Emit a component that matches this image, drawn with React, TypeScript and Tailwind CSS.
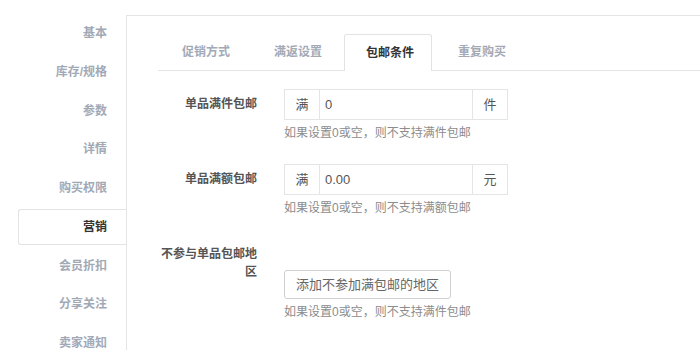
import React from 'react';

const font = { fontFamily: '"Liberation Sans", "Noto Sans CJK SC", sans-serif' };

const navItems = ['基本', '库存/规格', '参数', '详情', '购买权限', '营销', '会员折扣', '分享关注', '卖家通知'];
const tabs = ['促销方式', '满返设置', '包邮条件', '重复购买'];

const InputGroup: React.FC<{ value: string; unit: string }> = ({ value, unit }) => (
  <div className="flex h-[31px] w-[224px] border border-[#e5e5e5] text-[13px] text-[#555]">
    <span className="w-[35px] flex items-center justify-center border-r border-[#e5e5e5]">满</span>
    <span className="flex-1 flex items-center pl-[5px]">{value}</span>
    <span className="w-[35px] flex items-center justify-center border-l border-[#e5e5e5]">{unit}</span>
  </div>
);

const Help: React.FC<{ text: string }> = ({ text }) => (
  <p className="mt-1 text-xs leading-[18px] text-[#8c8c8c]">{text}</p>
);

export default function App() {
  return (
    <div className="w-[700px] h-[350px] overflow-hidden bg-white flex" style={font}>
      {/* side nav */}
      <div className="w-[126px] shrink-0 pt-[15px] flex flex-col gap-[2.75px]">
        {navItems.map((item) => (
          <div
            key={item}
            className={`ml-[18px] h-9 shrink-0 flex items-center justify-end pr-[19px] text-xs font-bold ${
              item === '营销'
                ? 'border border-r-0 border-[#e3e3e3] rounded-l-[3px] text-[#333]'
                : 'text-[#a2a9b6]'
            }`}
          >
            {item}
          </div>
        ))}
      </div>

      {/* main panel */}
      <div className="flex-1 mt-[15px] border-t border-l border-[#e5e5e5] pl-[31px]">
        <div className="mt-[18px] flex border-b border-[#e5e5e5] pl-[2px]">
          {tabs.map((tab) => (
            <div
              key={tab}
              className={`w-[88px] h-9 mr-[4px] flex items-center justify-center pl-[4px] text-xs font-bold ${
                tab === '包邮条件'
                  ? 'border border-b-0 border-[#e3e3e3] rounded-t-[3px] bg-white text-[#333] -mb-px h-[37px]'
                  : 'text-[#a3aab7]'
              }`}
            >
              {tab}
            </div>
          ))}
        </div>

        <div className="pt-[18px] flex flex-col gap-[22px]">
          <div className="flex">
            <label className="w-[99px] pt-[6px] text-right text-xs font-bold leading-[18px] text-[#555]">单品满件包邮</label>
            <div className="ml-[27px]">
              <InputGroup value="0" unit="件" />
              <Help text="如果设置0或空，则不支持满件包邮" />
            </div>
          </div>
          <div className="flex">
            <label className="w-[99px] pt-[6px] text-right text-xs font-bold leading-[18px] text-[#555]">单品满额包邮</label>
            <div className="ml-[27px]">
              <InputGroup value="0.00" unit="元" />
              <Help text="如果设置0或空，则不支持满额包邮" />
            </div>
          </div>
          <div className="flex">
            <label className="w-[99px] pt-[6px] text-right text-xs font-bold leading-[18px] text-[#555]">不参与单品包邮地区</label>
            <div className="ml-[27px] pt-[31px]">
              <button className="h-[29px] px-[11px] border border-[#d0d0d0] rounded-[3px] text-[13px] text-[#666] bg-white">
                添加不参加满包邮的地区
              </button>
              <Help text="如果设置0或空，则不支持满件包邮" />
            </div>
          </div>
        </div>
      </div>
    </div>
  );
}
